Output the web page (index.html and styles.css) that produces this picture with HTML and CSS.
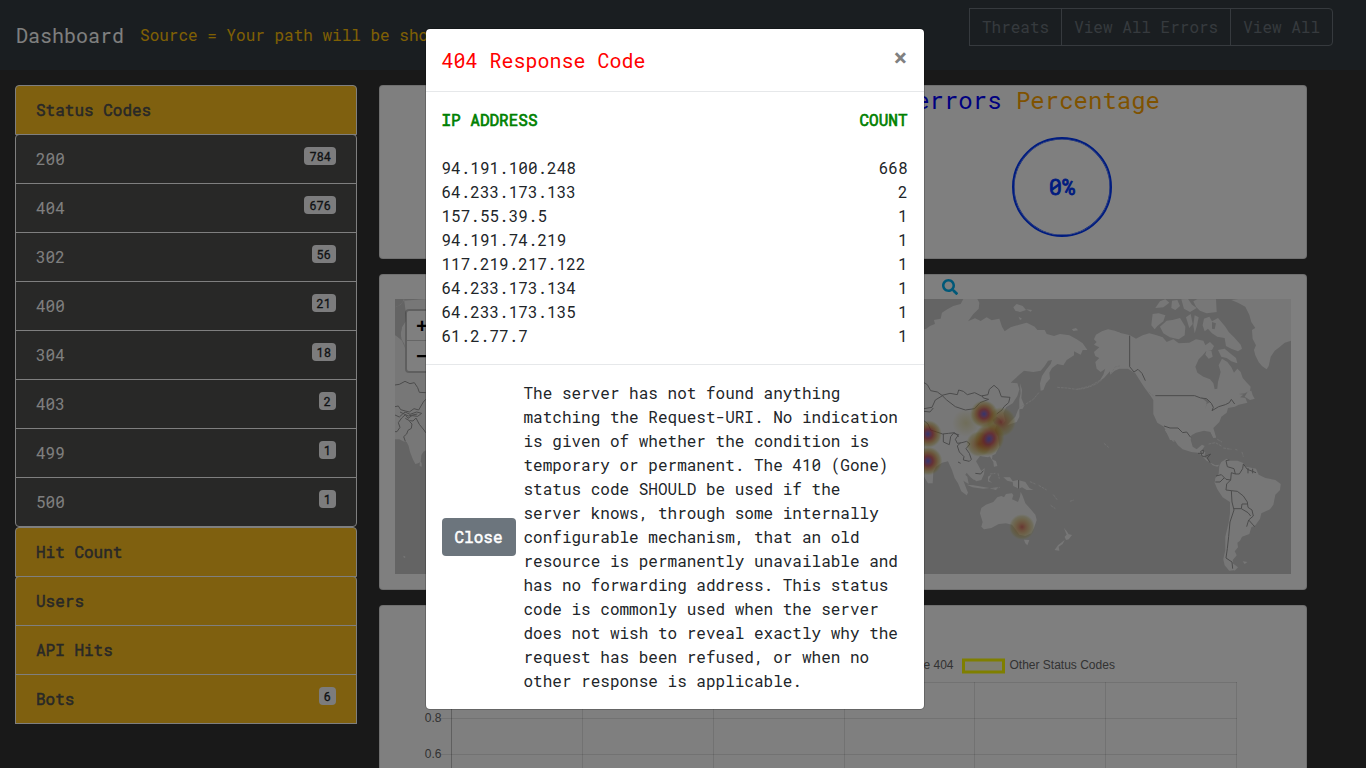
FILE: index.html
```html
<!DOCTYPE html>
<html lang="en">
<head>
<meta charset="utf-8">
<title>Dashboard</title>
<link rel="stylesheet" href="styles.css">
</head>
<body>
<header class="navbar">
  <span class="brand">Dashboard</span>
  <span class="source">Source = Your path will be shown here</span>
  <div class="btn-group">
    <button class="btn-outline">Threats</button><button class="btn-outline">View All Errors</button><button class="btn-outline">View All</button>
  </div>
</header>
<main class="layout">
  <aside class="sidebar">
    <div class="item gold top">Status Codes</div>
    <div class="codes">
      <div class="item">200<span class="badge">784</span></div>
      <div class="item">404<span class="badge">676</span></div>
      <div class="item">302<span class="badge">56</span></div>
      <div class="item">400<span class="badge">21</span></div>
      <div class="item">304<span class="badge">18</span></div>
      <div class="item">403<span class="badge">2</span></div>
      <div class="item">499<span class="badge">1</span></div>
      <div class="item">500<span class="badge">1</span></div>
    </div>
    <div class="item gold top">Hit Count</div>
    <div class="item gold top">Users</div>
    <div class="item gold">API Hits</div>
    <div class="item gold">Bots<span class="badge">6</span></div>
  </aside>
  <section class="content">
    <div class="card card-percent">
      <h4 class="percent-title"><span class="blue">errors</span> <span class="orange">Percentage</span></h4>
      <div class="ring">0%</div>
    </div>
    <div class="card card-map">
      <div class="search-row">
        <svg class="search" viewBox="0 0 512 512"><path fill="#00b0f0" d="M505 442.7L405.3 343c-4.5-4.5-10.6-7-17-7H372c27.6-35.3 44-79.7 44-128C416 93.1 322.9 0 208 0S0 93.1 0 208s93.1 208 208 208c48.3 0 92.7-16.4 128-44v16.3c0 6.4 2.5 12.5 7 17l99.7 99.7c9.4 9.4 24.6 9.4 33.9 0l28.3-28.3c9.4-9.4 9.4-24.6.1-34zM208 336c-70.7 0-128-57.2-128-128 0-70.7 57.2-128 128-128 70.7 0 128 57.2 128 128 0 70.7-57.2 128-128 128z"/></svg>
      </div>
      <div class="map">
        <svg class="map-svg" viewBox="395 299 896 275">
          <defs>
            <radialGradient id="hot">
              <stop offset="0" stop-color="#5a5ad8" stop-opacity=".9"/>
              <stop offset=".14" stop-color="#8450a8" stop-opacity=".85"/>
              <stop offset=".34" stop-color="#c03c48" stop-opacity=".78"/>
              <stop offset=".6" stop-color="#c87820" stop-opacity=".6"/>
              <stop offset=".82" stop-color="#c0a83c" stop-opacity=".4"/>
              <stop offset="1" stop-color="#c8c864" stop-opacity="0"/>
            </radialGradient>
            <radialGradient id="warm">
              <stop offset="0" stop-color="#c84c44" stop-opacity=".8"/>
              <stop offset=".28" stop-color="#cc7234" stop-opacity=".62"/>
              <stop offset=".6" stop-color="#c4982c" stop-opacity=".45"/>
              <stop offset=".82" stop-color="#b8a83c" stop-opacity=".3"/>
              <stop offset="1" stop-color="#c8c850" stop-opacity="0"/>
            </radialGradient>
            <radialGradient id="mild">
              <stop offset="0" stop-color="#d2c878" stop-opacity=".5"/>
              <stop offset="1" stop-color="#d2c878" stop-opacity="0"/>
            </radialGradient>
          </defs>
          <rect class="sea" x="395" y="299" width="896" height="275"/>
          <!-- western edge -->
          <g transform="translate(380 270) scale(.33333)">
            <path class="land" d="M45 112L60 106L70 94L72 87L50 87L45 87ZM45 112L55 108L70 92L140 87V540L130 545L124 555L122 575L114 580L106 582L98 566L90 545L86 528L80 516L70 514L58 508L45 508V195L52 200L66 212L76 236L73 222L64 206L62 192L66 172L76 156L78 130L72 87L56 104ZM120 572L125 580L125 590L119 588ZM71 857L76 860L75 864L70 861Z"/>
            <path class="sea" d="M45 87H72L67 98L56 107L45 112ZM45 114L72 100L75 130L76 154L66 168L62 190L64 206L45 195Z"/>
            <path class="border" d="M45 345L58 343L75 334L90 341L103 338L113 353L118 367L137 368M45 410L55 408L62 419L76 423L88 426L102 416L116 420L130 396L137 388M45 435L58 441L68 432L75 426L90 433L110 426L125 430L113 439L96 437L84 445L76 434L65 444L55 458L60 472L51 485L45 485M76 445L88 452L99 453L108 444L118 463L132 480L137 488M88 454L96 462L94 475L84 481L80 492L71 500L76 514M60 426L85 438L112 432"/>
          </g>
          <!-- northern and eastern Asia -->
          <g transform="translate(920 270) scale(.33333)">
            <path class="land" d="M0 180L18 177L30 168L45 162L42 150L62 146L66 128L82 118L100 108L122 102L130 87L172 87L178 98L176 116L160 132L144 154L165 145L182 153L200 142L215 151L238 146L246 170L254 184L272 172L298 164L320 158L344 170L352 180L374 180L380 192L402 198L420 192L448 196L470 208L488 220L502 240L488 240L482 254L462 244L462 256L440 270L430 286L412 282L396 294L388 308L390 326L378 340L370 360L362 362L360 340L366 318L378 300L392 282L396 270L384 272L374 288L362 302L340 306L312 302L296 316L278 332L272 338L292 340L298 358L292 378L278 400L258 412L250 430L256 452L248 462L240 446L230 440L218 450L222 460L230 466L224 480L234 500L238 530L226 552L204 562L180 558L168 574L176 588L184 604L178 624L162 630L152 622L140 608L128 626L136 648L144 668L140 676L124 664L114 640L104 624L96 600L84 574L66 578L48 590L40 606L38 640L24 640L0 600Z"/>
            <path class="land" d="M280 112L290 102L308 108L318 120L300 126L286 122ZM318 118L336 120L332 125ZM296 140L306 146L300 150ZM456 178L468 174L474 181L460 183ZM300 340L306 360L304 384L312 404L302 410L298 420L298 388L302 370ZM300 412L314 404L308 416L298 418L298 440L290 456L272 462L262 466L270 456L286 440L294 420Z"/>
            <path class="land" d="M600 188L584 182L564 178L546 184L528 194L522 208L530 216L522 224L538 232L522 246L526 258L538 264L526 276L530 296L542 306L556 296L550 314L538 334L552 324L570 304L588 292L600 286Z"/>
            <path class="island" d="M545 330L530 341L510 350L490 356L468 358L440 354L410 352M318 402L340 388L358 366"/>
            <path class="border" d="M12 338L22 344L32 362L52 366L66 376L90 370L112 374L116 360L130 364L142 374L164 368L184 378L204 374L208 358L222 346L236 358L244 380L270 382L266 398L252 410L246 420L230 432M66 376L80 390L106 410L136 420L164 416L180 398L206 388L190 384L186 376M66 378L46 390L36 412L12 416M12 424L30 426L40 414M12 452L24 462L32 480L50 486L68 492L86 490L104 488L116 500M70 492V516L88 524L92 500L100 490L116 494L106 508L112 520L126 518L140 514L150 522L138 536L148 550L154 568L148 574L130 570L132 560L118 546L112 528L122 518"/>
          </g>
          <!-- South-East Asia and Oceania -->
          <g transform="translate(920 380) scale(.33333)">
            <path class="land" d="M180 400L184 384L198 374L220 366L232 352L244 348L252 352L258 342L276 340L280 346L276 358L294 366L300 350L302 336L308 348L316 370L332 388L346 404L350 420L342 444L334 460L316 468L298 464L288 450L276 434L258 430L236 432L214 444L192 448L184 440L188 426ZM312 479L328 480L322 496L316 490ZM432 444L440 454L446 463L456 465L446 478L438 480L434 470L440 464ZM434 480L428 492L416 500L418 512L404 510L414 496ZM94 252L106 258L126 276L142 290L146 312L130 302L108 274ZM140 314L160 316L186 320L208 324L190 326L158 322ZM162 278L180 276L194 264L192 282L184 300L168 304L160 292ZM204 290L214 284L206 300L216 308L204 304ZM250 292L270 292L278 304L294 300L316 306L328 324L340 330L320 330L306 322L296 326L280 318L278 306L262 302ZM208 214L218 218L216 238L228 244L232 258L222 260L220 246L210 230ZM210 325L234 322L228 330Z"/>
            <path class="island" d="M330 305L346 312M356 316L380 330M392 376L406 386M400 344L412 360M450 364L462 360M552 190L568 204M234 280L238 296M216 326L240 322M210 282L226 280M472 28L510 18L542 0"/>
            <path class="border" d="M296 300V326M166 280L182 282L190 272M114 246L122 250"/>
          </g>
          <!-- North America -->
          <g transform="translate(1110 290) scale(.33333)">
            <path class="land" d="M0 122L28 128L60 136L78 146L98 136L118 130L140 136L158 142L170 156L190 148L206 160L238 158L258 148L280 152L286 166L300 156L312 168L306 180L288 184L278 196L266 208L256 230L262 248L280 260L300 268L310 280L314 298L322 296L324 276L328 262L332 246L326 226L336 206L352 216L364 232L372 248L382 236L392 246L398 264L412 280L422 290L420 302L404 310L386 312L400 314L390 322L406 324L412 338L386 344L374 350L354 354L350 368L334 380L328 396L310 414L318 442L310 444L302 426L282 422L258 428L244 436L240 450H180L162 410L142 398L130 372L130 330L122 318L106 296L94 278L76 250L54 236L28 236L14 242L0 254Z"/>
            <path class="land" d="M128 72L146 70L166 76L160 94L142 108L134 118L124 106ZM150 110L170 92L188 90L210 84L226 110L224 136L206 148L180 142L160 130ZM136 54L150 34L166 28L178 38L160 52ZM186 32L202 30L210 48L196 60L184 54ZM214 28L234 27L246 44L260 54L240 66L222 56ZM250 34L262 28H318L320 66L290 70L270 62L258 50ZM228 82L242 72L248 102L238 114ZM254 76L266 82L260 110L254 130L250 106ZM282 86L298 80L306 94L324 84L346 110L356 126L372 142L392 164L396 176L384 184L364 176L348 168L344 144L322 140L306 130L294 116L284 124L278 106ZM324 180L344 176L360 190L378 204L382 220L364 214L350 204L334 200ZM290 180L304 182L308 200L296 206L286 194ZM404 320L414 304L424 302L428 316L434 326L420 330Z"/>
            <path class="land" d="M364 30L386 27H543V152L524 158L508 172L494 182L482 200L476 228L470 238L456 228L446 216L436 196L432 180L438 166L428 146L426 120L436 114L424 96L418 74L406 50L384 38Z"/>
            <path class="sea" d="M306 96L318 100L314 118L306 116ZM318 148L328 150L324 174L318 172ZM272 322L292 328L302 336L290 342L286 360L290 336Z"/>
            <path class="island" d="M2 252L16 230L30 228M116 306L134 320"/>
            <path class="border" d="M59 137V230L72 246L84 238L96 250L106 272M136 317H254L272 324L290 326L304 340L310 352L306 362L326 350L346 344L358 338L364 328L374 342M162 408L180 414L204 414L218 428L230 426L242 442"/>
          </g>
          <!-- Central and South America -->
          <g transform="translate(1110 430) scale(.33333)">
            <path class="land" d="M174 0L182 22L196 34L204 46L218 58L244 66L264 68L274 76L290 92L302 98L316 106L328 104L322 110L308 106L292 88L282 80L286 68L276 60L284 48L276 44L260 58L248 50L242 30L244 12L242 0ZM164 0H172L194 36L188 34ZM298 0H310L318 24L310 22ZM328 108L334 96L350 86L358 92L382 92L398 98L408 110L438 116L446 134L466 144L496 150L512 162L510 180L496 194L490 224L480 238L454 250L450 266L436 286L424 292L418 312L396 320L390 332L382 338L384 352L374 364L380 376L368 390L370 410L376 420L358 422L344 406L340 388L346 360L346 320L356 278L360 250L360 216L338 202L322 178L314 158L316 144L326 132ZM366 398L384 412L374 422L362 410ZM398 394L412 396L404 402ZM500 412L506 420Z"/>
            <path class="island" d="M296 42L316 38L334 48M340 54L364 58M376 58L382 60M396 66L400 80M322 28L336 36"/>
            <path class="border" d="M210 0L218 8L230 6L242 22M264 70H280V60L272 64L276 78L284 80L302 72L292 84L300 98M358 90L348 92L352 110L372 116L376 132L388 132L398 116L400 102L412 118L438 128M414 114V130M428 116V130M376 132L364 128L362 150L350 162L348 180L364 182L382 184L400 198L412 216L414 232L426 240L430 258L416 270L410 290M416 270L434 290M364 182L366 216L372 240L360 276L356 320L352 356L348 384L366 396L368 416M372 236L394 236L396 222L412 222M394 236L414 248L422 258M318 138L334 134L348 148L362 150M316 156L330 156L342 144"/>
          </g>
          <!-- heat layer -->
          <g>
            <circle cx="966" cy="423" r="14" fill="url(#mild)"/>
            <circle cx="1001" cy="422" r="15" fill="url(#warm)"/>
            <circle cx="979" cy="444" r="13" fill="url(#warm)"/>
            <ellipse cx="989" cy="439" rx="15" ry="18" fill="url(#hot)" transform="rotate(30 989 439)"/>
            <circle cx="984" cy="414" r="14" fill="url(#hot)"/>
            <circle cx="928" cy="434" r="14" fill="url(#hot)"/>
            <circle cx="928" cy="461" r="14.500" fill="url(#hot)"/>
            <circle cx="1022" cy="527" r="13" fill="url(#warm)"/>
          </g>
        </svg>
        <div class="zoom"><span class="zoom-in">+</span><span class="zoom-out">−</span></div>
      </div>
    </div>
    <div class="card card-chart">
      <svg class="chart" viewBox="380 606 926 162" width="926" height="162">
        <g class="grid">
          <path d="M441 682.5H1237M441 718.5H1237M441 754.5H1237M582.5 682V786M713.5 682V786M844.5 682V786M974.5 682V786M1105.5 682V786M1236.5 682V786"/>
          <path class="axis" d="M451.500 682V786"/>
        </g>
        <g class="chart-text">
          <text x="953.500" y="669" text-anchor="end">Code 404</text>
          <text x="1009.500" y="669">Other Status Codes</text>
          <text x="441.500" y="722" text-anchor="end">0.8</text>
          <text x="441.500" y="758" text-anchor="end">0.6</text>
        </g>
        <rect class="swatch" x="963.500" y="660" width="40" height="12"/>
      </svg>
    </div>
  </section>
</main>
<div class="backdrop">
</div>
<div class="modal">
  <div class="modal-header">
    <h5 class="modal-title">404 Response Code</h5>
    <span class="close">×</span>
  </div>
  <div class="modal-body">
    <div class="row head"><span>IP ADDRESS</span><span>COUNT</span></div>
    <div class="row"><span>94.191.100.248</span><span>668</span></div>
    <div class="row"><span>64.233.173.133</span><span>2</span></div>
    <div class="row"><span>157.55.39.5</span><span>1</span></div>
    <div class="row"><span>94.191.74.219</span><span>1</span></div>
    <div class="row"><span>117.219.217.122</span><span>1</span></div>
    <div class="row"><span>64.233.173.134</span><span>1</span></div>
    <div class="row"><span>64.233.173.135</span><span>1</span></div>
    <div class="row"><span>61.2.77.7</span><span>1</span></div>
  </div>
  <div class="modal-footer">
    <button class="btn-close">Close</button>
    <p class="explain">The server has not found anything matching the Request-URI. No indication is given of whether the condition is temporary or permanent. The 410 (Gone) status code SHOULD be used if the server knows, through some internally configurable mechanism, that an old resource is permanently unavailable and has no forwarding address. This status code is commonly used when the server does not wish to reveal exactly why the request has been refused, or when no other response is applicable.</p>
  </div>
</div>
</body>
</html>
```
FILE: styles.css
```css
* { box-sizing: border-box; }
body {
  margin: 0;
  height: 768px;
  overflow: hidden;
  background: #333;
  color: #212529;
  font: 400 16px/1.5 "Roboto Mono", "Liberation Mono", monospace;
}
button { font: inherit; }
.navbar {
  display: flex;
  align-items: flex-start;
  height: 70px;
  padding: 8px 33px 0 16px;
  background: #353d42;
}
.brand { margin: 12px 16px 0 0; font-size: 20px; color: #fff; }
.source { margin-top: 15px; color: #ffc107; white-space: nowrap; }
.btn-group { display: flex; margin-left: auto; }
.btn-outline {
  height: 38px;
  padding: 0 12px;
  border: 1px solid #6c757d;
  background: transparent;
  color: #6c757d;
  white-space: nowrap;
}
.btn-outline + .btn-outline { margin-left: -1px; }
.btn-outline:last-child { border-radius: 0 4px 4px 0; }

.layout { display: flex; gap: 22px; height: 698px; padding: 15px 15px 0; }
.sidebar { flex: 0 0 342px; }
.item {
  height: 50px;
  margin-bottom: -1px;
  padding: 12px 20px;
  border: 1px solid #fff;
  background: #50504e;
  color: #fff;
}
.gold {
  position: relative;
  background: #ffc11f;
  color: #50504e;
  -webkit-text-stroke: .5px #50504e;
}
.top { border-radius: 4px 4px 0 0; }
.codes { padding-bottom: 1px; }
.codes .item:first-child { border-radius: 4px 4px 0 0; }
.codes .item:last-child { border-radius: 0 0 4px 4px; }
.badge {
  float: right;
  padding: 3px 5px;
  border-radius: 4px;
  background: #f8f9fa;
  color: #212529;
  font-size: 12px;
  line-height: 12px;
  -webkit-text-stroke: .3px #212529;
}
.content { flex: 0 0 928px; }
.card {
  margin-bottom: 15px;
  border: 1px solid rgba(0, 0, 0, .125);
  border-radius: 4px;
  background: #fff;
  background-clip: border-box;
}
.card-percent { height: 174px; }
.percent-title {
  margin: 0;
  padding-right: 146px;
  font-size: 24px;
  line-height: 29px;
  font-weight: 400;
  text-align: right;
}
.blue { color: blue; }
.orange { color: orange; }
.ring {
  width: 100px;
  height: 100px;
  margin: 22px 194px 0 auto;
  border: 2px solid #0038ff;
  box-shadow: inset 0 0 0 .5px #0038ff;
  border-radius: 50%;
  color: #0038ff;
  font-size: 22px;
  -webkit-text-stroke: .8px #0038ff;
  line-height: 96px;
  text-align: center;
}
.card-map { height: 316px; padding: 0 15px; }
.search-row { display: flex; height: 24px; padding: 4px 0 0 547px; }
.search { width: 16px; height: 16px; }
.map { position: relative; height: 275px; }
.map-svg { display: block; width: 896px; height: 275px; }
.sea { fill: #c9c9c9; }
.land { fill: #efefef; }
.border { fill: none; stroke: #979797; stroke-width: 3; stroke-linejoin: round; }
.island { fill: none; stroke: #e2e2e2; stroke-width: 3; stroke-dasharray: 8 3; }
.zoom {
  position: absolute;
  left: 10px;
  top: 10px;
  width: 34px;
  height: 64px;
  border: 2px solid rgba(0, 0, 0, .2);
  border-radius: 4px;
  background: #fff;
  background-clip: padding-box;
  color: #000;
  font: bold 20px/34px "Liberation Mono", monospace;
  text-align: center;
}
.zoom span { display: block; height: 30px; }
.zoom .zoom-in { border-bottom: 1px solid #ccc; }
.card-chart { height: 163px; margin: 0; border-bottom: 0; border-radius: 4px 4px 0 0; overflow: hidden; }
.chart { display: block; }
.grid { fill: none; stroke: rgba(0, 0, 0, .1); }
.axis { stroke: rgba(0, 0, 0, .25); }
.chart-text { fill: #666; font: 12px "Liberation Sans", Arial, sans-serif; }
.swatch { fill: rgba(255, 255, 0, .1); stroke: #ff0; stroke-width: 3; }

.backdrop { position: absolute; inset: 0; background: rgba(0, 0, 0, .5); }
.modal {
  position: absolute;
  left: 424.5px;
  top: 28px;
  width: 500px;
  height: 682px;
  border: 1px solid rgba(0, 0, 0, .2);
  border-radius: 5px;
  background: #fff;
  background-clip: padding-box;
}
.modal-header {
  display: flex;
  justify-content: space-between;
  height: 63px;
  padding: 16px;
  border-bottom: 1px solid #e6e8ea;
}
.modal-title { margin: 0; font-size: 20px; line-height: 30px; font-weight: 400; color: red; }
.close { font-size: 24px; line-height: 24px; font-weight: 700; color: #808080; }
.modal-body { padding: 16px; }
.row { display: flex; justify-content: space-between; height: 24px; }
.head { margin-bottom: 24px; color: green; -webkit-text-stroke: .65px green; }
.modal-footer {
  display: flex;
  align-items: center;
  gap: 8px;
  padding: 16px;
  border-top: 1px solid #e6e8ea;
}
.btn-close {
  flex: 0 0 74px;
  height: 38px;
  padding: 0;
  border: 0;
  border-radius: 4px;
  background: #6c757d;
  color: #fff;
  -webkit-text-stroke: .5px #fff;
}
.explain { margin: 0; }
```
